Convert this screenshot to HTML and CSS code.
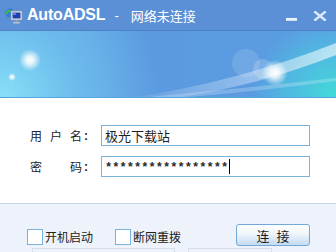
FILE: index.html
```html
<!DOCTYPE html>
<html>
<head>
<meta charset="utf-8">
<link rel="stylesheet" href="styles.css">
</head>
<body>
<div class="win">
  <div class="titlebar">
    <svg class="appicon" width="18" height="16" viewBox="0 0 18 16">
      <circle cx="5" cy="5" r="4.5" fill="#2f7fd8"/>
      <path d="M2 2.5 Q4 1 6 2.2 L5 4 L3 4.5 L2.3 6.5 L1 5.5 Q0.8 3.8 2 2.5Z" fill="#3cbf3c"/>
      <path d="M6.5 5 L9 4.5 L9.3 7 L7 8.5Z" fill="#3cbf3c"/>
      <rect x="6" y="3" width="11" height="9" fill="#e8edf4" stroke="#8a95a5" stroke-width="0.8"/>
      <rect x="7.5" y="4.5" width="8" height="6" fill="#1f3fae"/>
      <rect x="8" y="5" width="3" height="2" fill="#5d7fe0"/>
      <rect x="10.5" y="12" width="2" height="2" fill="#9aa3b0"/>
      <rect x="8" y="14" width="7" height="1.5" fill="#b8c0cc"/>
    </svg>
    <span class="apptitle">AutoADSL</span>
    <span class="dash">-</span>
    <span class="status">网络未连接</span>
    <span class="spacer"></span>
    <span class="minbtn"></span>
    <svg class="closebtn" width="12" height="10" viewBox="0 0 12 10">
      <path d="M1 1 L11 9 M11 1 L1 9" stroke="#dbeaf8" stroke-width="2.4" stroke-linecap="square"/>
    </svg>
  </div>
  <div class="banner">
    <svg width="336" height="66" viewBox="0 0 336 66">
      <defs>
        <linearGradient id="bg" x1="0" y1="0" x2="1" y2="0">
          <stop offset="0" stop-color="#62ade8"/>
          <stop offset="0.45" stop-color="#5b9ae0"/>
          <stop offset="1" stop-color="#5a9de2"/>
        </linearGradient>
        <radialGradient id="cl" cx="0" cy="72" r="160" gradientUnits="userSpaceOnUse">
          <stop offset="0" stop-color="#8ae4f8"/>
          <stop offset="0.5" stop-color="#78cdf2" stop-opacity="0.55"/>
          <stop offset="1" stop-color="#78cdf2" stop-opacity="0"/>
        </radialGradient>
        <radialGradient id="cr" cx="336" cy="70" r="85" gradientUnits="userSpaceOnUse">
          <stop offset="0" stop-color="#3ee0d6"/>
          <stop offset="0.6" stop-color="#48cfe0" stop-opacity="0.55"/>
          <stop offset="1" stop-color="#48cfe0" stop-opacity="0"/>
        </radialGradient>
        <radialGradient id="glow">
          <stop offset="0" stop-color="#ffffff"/>
          <stop offset="0.35" stop-color="#ffffff" stop-opacity="0.8"/>
          <stop offset="1" stop-color="#ffffff" stop-opacity="0"/>
        </radialGradient>
        <linearGradient id="streak" x1="0" y1="0" x2="1" y2="0">
          <stop offset="0" stop-color="#ffffff" stop-opacity="0"/>
          <stop offset="0.55" stop-color="#ffffff" stop-opacity="0.3"/>
          <stop offset="1" stop-color="#ffffff" stop-opacity="0.6"/>
        </linearGradient>
      </defs>
      <rect width="336" height="66" fill="url(#bg)"/>
      <rect width="336" height="66" fill="url(#cl)"/>
      <rect width="336" height="66" fill="url(#cr)"/>
      <path d="M110 70 Q 230 54 336 12 L336 24 Q 245 60 150 70 Z" fill="url(#streak)"/>
      <path d="M125 68 Q 230 59 336 47 L336 50 Q 230 64 135 70 Z" fill="#ffffff" fill-opacity="0.22"/>
      <circle cx="246" cy="32" r="14" fill="#ffffff" fill-opacity="0.13"/>
      <circle cx="263" cy="38" r="10" fill="#ffffff" fill-opacity="0.18"/>
      <circle cx="275" cy="42" r="13" fill="url(#glow)"/>
      <circle cx="30" cy="29" r="11" fill="url(#glow)"/>
      <circle cx="12" cy="46" r="4" fill="url(#glow)"/>
    </svg>
  </div>
  <div class="form">
    <div class="row">
      <div class="label"><span class="c20">用</span><span class="c20">户</span><span>名</span><span class="colon">:</span></div>
      <div class="input"><span class="val">极光下载站</span></div>
    </div>
    <div class="row">
      <div class="label"><span class="c40">密</span><span>码</span><span class="colon">:</span></div>
      <div class="input"><span class="pw">*****************</span><span class="caret"></span></div>
    </div>
  </div>
  <div class="footer">
    <div class="controls">
      <label class="check g1"><span class="box"></span><span class="ctext">开机启动</span></label>
      <label class="check"><span class="box"></span><span class="ctext">断网重拨</span></label>
      <span class="button">连 接</span>
    </div>
    <div class="strip">
      <span class="tab t1"></span>
      <span class="tab t2"></span>
    </div>
  </div>
</div>
</body>
</html>
```

FILE: styles.css
```css
* { box-sizing: border-box; }
html, body { margin: 0; padding: 0; background: #ffffff; }
.win {
  width: 336px;
  height: 252px;
  overflow: hidden;
  font-family: "Noto Sans CJK SC", "Liberation Sans", sans-serif;
  display: flex;
  flex-direction: column;
}
.titlebar {
  height: 31px;
  background: #5b8fd6;
  border-bottom: 1px solid #5080c4;
  display: flex;
  align-items: center;
  padding-left: 5px;
  color: #ffffff;
  flex: none;
}
.appicon { flex: none; margin-top: 1px; }
.apptitle {
  margin-left: 4px;
  font-family: "Liberation Sans", sans-serif;
  font-weight: bold;
  font-size: 16px;
  letter-spacing: -0.2px;
  line-height: 1;
}
.dash {
  margin-left: 9px;
  font-family: "Liberation Sans", sans-serif;
  font-size: 13px;
  line-height: 1;
}
.status {
  margin-left: 12px;
  font-size: 13px;
  line-height: 1;
}
.spacer { flex: 1; }
.minbtn {
  width: 11px;
  height: 3px;
  background: linear-gradient(#ffffff, #c8dcf2);
  margin-top: 9px;
  margin-right: 17px;
  flex: none;
}
.closebtn { flex: none; margin-right: 10px; margin-top: 2px; }
.banner {
  height: 67px;
  border-bottom: 1px solid #52a6de;
  flex: none;
  line-height: 0;
}
.form {
  height: 105px;
  background: #ffffff;
  padding-top: 27px;
  display: flex;
  flex-direction: column;
  gap: 10px;
  flex: none;
}
.row {
  display: flex;
  align-items: center;
  padding-left: 30px;
}
.label {
  width: 71px;
  display: flex;
  font-size: 12px;
  color: #222222;
  line-height: 14px;
}
.c20 { width: 20px; }
.c40 { width: 40px; }
.colon { margin-left: 2px; font-family: "Liberation Sans", sans-serif; font-weight: bold; }
.input {
  width: 209px;
  height: 21px;
  border: 1px solid #7ab4dc;
  display: flex;
  align-items: center;
  padding-left: 3px;
  background: #ffffff;
}
.val { font-size: 13px; color: #1e1e1e; line-height: 1; }
.pw {
  font-family: "Liberation Mono", monospace;
  font-size: 12px;
  letter-spacing: 0.05px;
  color: #2a2a2a;
  font-weight: bold;
  line-height: 1;
  margin-top: 3px;
}
.caret {
  width: 1px;
  height: 15px;
  background: #000000;
  margin-left: 1px;
}
.footer {
  flex: 1;
  border-top: 1px solid #cad7e7;
  background: #eef3fb;
  padding-top: 20px;
}
.controls {
  display: flex;
  align-items: flex-end;
  padding-left: 27px;
  padding-right: 26px;
  height: 22px;
}
.check {
  display: flex;
  align-items: center;
  margin-bottom: 1px;
}
.g1 { margin-right: 22px; }
.box {
  width: 16px;
  height: 16px;
  border: 1px solid #7ab4dc;
  background: #ffffff;
  margin-right: 2px;
}
.ctext { font-size: 12px; color: #222222; line-height: 16px; }
.button {
  margin-left: auto;
  width: 74px;
  height: 22px;
  border: 1px solid #70a9d8;
  border-radius: 3px;
  background: linear-gradient(#ffffff, #f2f7fc 40%, #c4dbf1);
  display: flex;
  align-items: center;
  justify-content: center;
  font-size: 13px;
  color: #1a1a1a;
  letter-spacing: 2px;
  padding-left: 2px;
}
.strip {
  margin-top: 2px;
  display: flex;
  height: 6px;
}
.tab {
  height: 6px;
  border: 1px solid #d6dee9;
  border-bottom: none;
}
.t1 { margin-left: 32px; width: 143px; }
.t2 { margin-left: 13px; width: 84px; }
```
